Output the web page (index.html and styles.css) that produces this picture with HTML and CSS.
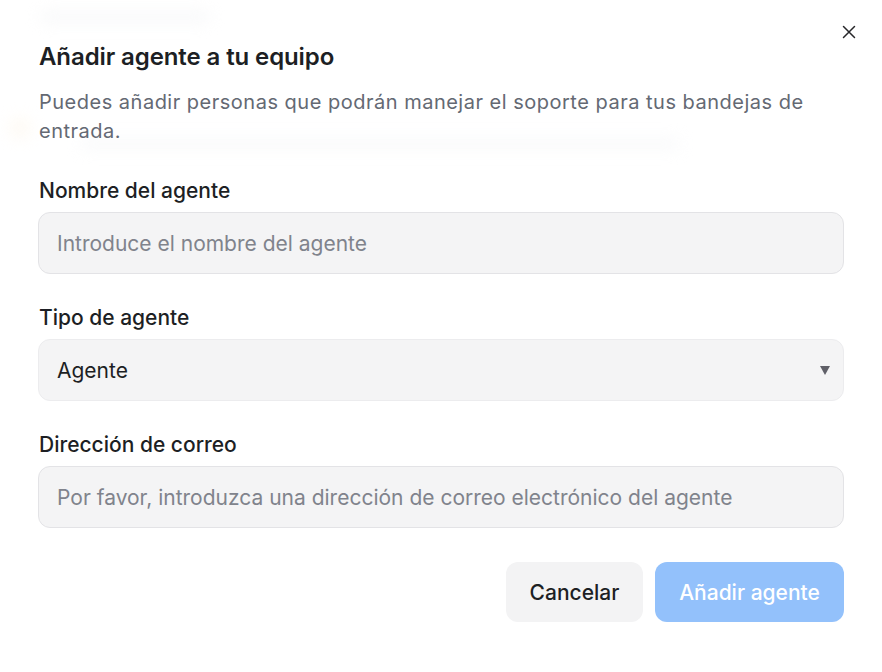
FILE: index.html
```html
<!DOCTYPE html>
<html lang="es">
<head>
<meta charset="utf-8">
<title>Añadir agente</title>
<link rel="stylesheet" href="styles.css">
</head>
<body>
<div class="backdrop">
  <div class="ghost g1"></div>
  <div class="ghost g2"></div>
  <div class="ghost g3"></div>
</div>
<div class="modal">
  <button class="close" aria-label="Cerrar">
    <svg width="14" height="14" viewBox="0 0 14 14"><path d="M1.5 1.5 L12.5 12.5 M12.5 1.5 L1.5 12.5" stroke="#27272a" stroke-width="1.5" stroke-linecap="round" fill="none"/></svg>
  </button>
  <h2 class="title">Añadir agente a tu equipo</h2>
  <p class="desc">Puedes añadir personas que podrán manejar el soporte para tus bandejas de entrada.</p>
  <form class="form">
    <label class="field">
      <span class="label">Nombre del agente</span>
      <input class="control" type="text" placeholder="Introduce el nombre del agente">
    </label>
    <label class="field">
      <span class="label">Tipo de agente</span>
      <span class="select">
        <span class="value">Agente</span>
        <span class="caret"></span>
      </span>
    </label>
    <label class="field">
      <span class="label">Dirección de correo</span>
      <input class="control" type="text" placeholder="Por favor, introduzca una dirección de correo electrónico del agente">
    </label>
    <div class="actions">
      <button type="button" class="btn cancel">Cancelar</button>
      <button type="button" class="btn primary">Añadir agente</button>
    </div>
  </form>
</div>
</body>
</html>
```
FILE: styles.css
```css
* { box-sizing: border-box; }
html, body { margin: 0; padding: 0; }
body {
  width: 882px;
  height: 672px;
  background: #ffffff;
  font-family: Inter, "Noto Sans", sans-serif;
  position: relative;
  overflow: hidden;
}
.backdrop { position: absolute; inset: 0; filter: blur(8px); opacity: 0.5; }
.ghost { position: absolute; background: #eef0f3; border-radius: 6px; }
.g1 { left: 40px; top: 12px; width: 170px; height: 10px; }
.g2 { left: 10px; top: 118px; width: 20px; height: 20px; background: #fdf3e4; border-radius: 50%; }
.g3 { left: 80px; top: 140px; width: 600px; height: 8px; }
.modal {
  position: relative;
  padding: 42px 38px 0 39px;
  height: 100%;
}
.close {
  position: absolute;
  top: 25px;
  right: 26px;
  width: 14px;
  height: 14px;
  padding: 0;
  border: 0;
  background: none;
  display: flex;
}
.title {
  margin: 0;
  font-size: 24px;
  line-height: 30px;
  font-weight: 600;
  color: #1d1f24;
  letter-spacing: -0.1px;
}
.desc {
  margin: 16px 0 0;
  font-size: 20px;
  line-height: 29px;
  color: #646973;
  letter-spacing: 0.5px;
  max-width: 800px;
}
.form { margin-top: 32px; display: flex; flex-direction: column; gap: 31px; }
.field { display: flex; flex-direction: column; gap: 8px; }
.label {
  font-size: 21px;
  line-height: 26px;
  font-weight: 500;
  color: #1d1f24;
}
.control, .select {
  width: 806px;
  margin-left: -1px;
  height: 62px;
  border: 1px solid #e3e3e6;
  border-radius: 12px;
  background: #f4f4f5;
  padding: 0 18px;
  font-family: inherit;
  font-size: 21px;
  color: #1d1f24;
  outline: none;
}
.control::placeholder { color: #80838c; }
.select { display: flex; align-items: center; justify-content: space-between; border-color: #ececee; }
.value { color: #1d1f24; }
.caret {
  width: 0; height: 0;
  border-left: 5px solid transparent;
  border-right: 5px solid transparent;
  border-top: 9px solid #606068;
  margin-right: -5px;
}
.actions { display: flex; justify-content: flex-end; gap: 12px; margin-top: 3px; }
.btn {
  height: 60px;
  border: 0;
  border-radius: 12px;
  font-family: inherit;
  font-size: 21px;
  font-weight: 500;
  padding: 0 20px;
}
.cancel { background: #f3f3f4; color: #1d1f24; width: 137px; }
.primary { background: #93c1fb; color: #ffffff; width: 189px; }
```
